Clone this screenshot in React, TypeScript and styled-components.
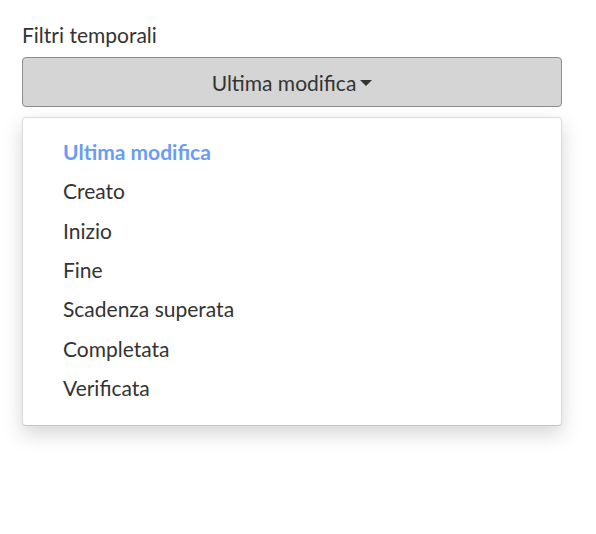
import React from "react";
import styled, { createGlobalStyle } from "styled-components";

const GlobalStyle = createGlobalStyle`
  html, body {
    margin: 0;
    padding: 0;
    background: #fff;
  }
  body {
    font-family: Lato, "Open Sans", sans-serif;
    color: #333;
  }
`;

const Page = styled.div`
  padding: 22px 34px 0 22px;
  width: 540px;
  min-height: 534px;
`;

const Title = styled.div`
  font-size: 21px;
  line-height: 25px;
  margin-bottom: 10px;
`;

const Dropdown = styled.div`
  position: relative;
`;

const Toggle = styled.button`
  display: flex;
  align-items: center;
  justify-content: center;
  width: 100%;
  height: 50px;
  box-sizing: border-box;
  background: #d5d5d5;
  border: 1px solid #8c8c8c;
  border-radius: 4px;
  font-family: inherit;
  font-size: 21px;
  color: #333;
  padding: 0 12px;
`;

const Caret = styled.span`
  display: inline-block;
  width: 0;
  height: 0;
  margin-left: 4px;
  margin-top: 2px;
  border-top: 6px solid #333;
  border-left: 6px solid transparent;
  border-right: 6px solid transparent;
`;

const Menu = styled.ul`
  position: absolute;
  z-index: 10;
  top: calc(100% + 10px);
  left: 0;
  right: 0;
  margin: 0;
  padding: 14px 0 18px;
  list-style: none;
  background: #fff;
  border: 1px solid rgba(0, 0, 0, 0.14);
  border-bottom-color: rgba(0, 0, 0, 0.22);
  border-radius: 4px;
  box-shadow: 0 8px 20px rgba(0, 0, 0, 0.17);
`;

const Item = styled.li<{ $active?: boolean }>`
  padding: 8px 40px;
  font-size: 21px;
  line-height: 23.33px;
  color: ${(p) => (p.$active ? "#6a9cf6" : "#333")};
  font-weight: ${(p) => (p.$active ? 700 : 400)};
`;

const Field = styled.div<{ $gap: number; $height?: number }>`
  margin-top: ${(p) => p.$gap}px;
  height: ${(p) => p.$height ?? 50}px;
  box-sizing: border-box;
  border: 1px solid #9a9a9a;
  border-radius: 4px;
  background: #fff;
`;

const options = [
  "Ultima modifica",
  "Creato",
  "Inizio",
  "Fine",
  "Scadenza superata",
  "Completata",
  "Verificata",
];

export default function App() {
  return (
    <>
      <GlobalStyle />
      <Page>
        <Title>Filtri temporali</Title>
        <Dropdown>
          <Toggle>
            Ultima modifica
            <Caret />
          </Toggle>
          <Menu>
            {options.map((o, i) => (
              <Item key={o} $active={i === 0}>
                {o}
              </Item>
            ))}
          </Menu>
        </Dropdown>
        <Field $gap={23} />
        <Field $gap={82} />
        <Field $gap={66} $height={45} />
      </Page>
    </>
  );
}
